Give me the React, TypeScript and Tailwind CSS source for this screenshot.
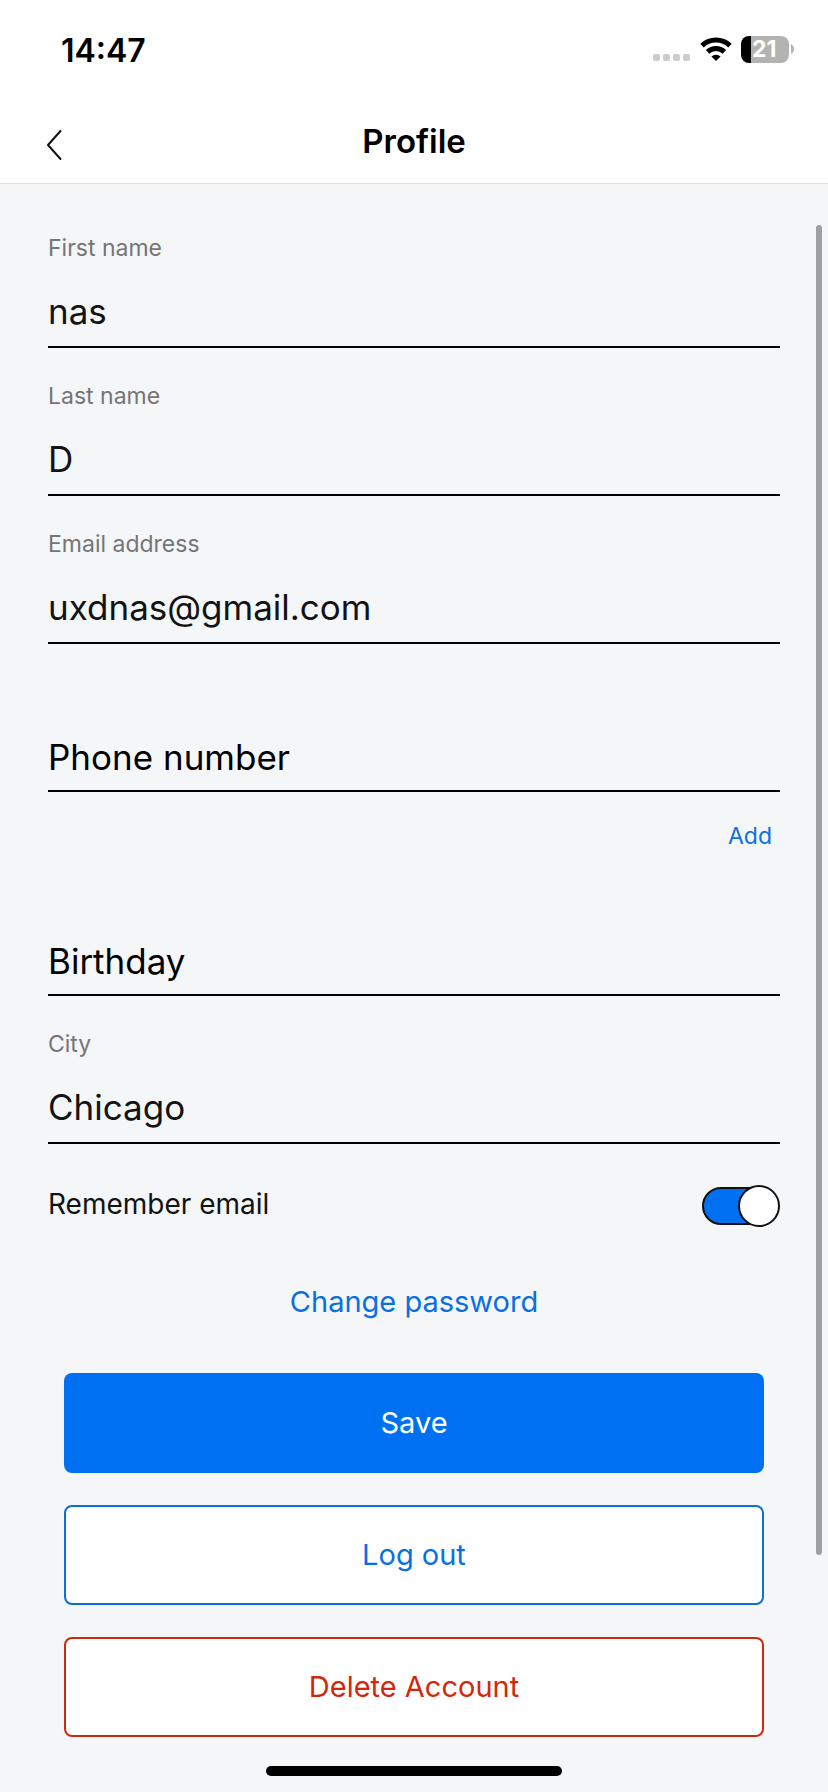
import { useState } from "react";

function StatusBar() {
  return (
    <div className="flex h-[98px] items-center justify-between pr-[34px] pl-[61px]">
      <span className="pt-1 text-[32px] leading-10 font-semibold">14:47</span>
      <div className="flex items-center">
        <svg className="mt-4 h-[7px] w-[37px]" viewBox="0 0 37 7" fill="#cccccc" aria-hidden="true">
          <rect x="0" width="7" height="7" rx="2" />
          <rect x="10" width="7" height="7" rx="2" />
          <rect x="20" width="7" height="7" rx="2" />
          <rect x="30" width="7" height="7" rx="2" />
        </svg>
        <svg className="ml-[10px] h-6 w-8" viewBox="0 0 32 24" fill="none" stroke="#000" strokeWidth="5" aria-hidden="true">
          <path d="M2 8.6a20.5 20.5 0 0 1 28 0" />
          <path d="M7.6 14.8a12.3 12.3 0 0 1 16.8 0" />
          <path d="M16 24l-4.6-4.4a6.6 6.6 0 0 1 9.2 0z" fill="#000" stroke="none" />
        </svg>
        <div className="ml-[9px] flex h-[27px] w-12 items-center overflow-hidden rounded-[8px] bg-[linear-gradient(to_right,#000_21%,#b3b3b3_21%)] pl-[11px]">
          <span className="text-[23px] leading-none font-bold text-white">21</span>
        </div>
        <svg className="ml-[2px] h-[10px] w-[3px]" viewBox="0 0 3 10" fill="#b3b3b3" aria-hidden="true">
          <path d="M0 0c4 2 4 8 0 10z" />
        </svg>
      </div>
    </div>
  );
}

function Field({
  id,
  label,
  type = "text",
  defaultValue = ""
}: {
  id: string;
  label: string;
  type?: string;
  defaultValue?: string;
}) {
  const [value, setValue] = useState(defaultValue);

  // the label rests on the line while the field is empty and floats above once it has a value
  return (
    <div className="relative flex h-[148px] flex-col justify-end border-b-2 border-black">
      <label
        htmlFor={id}
        className={value ? "mb-[82px] text-[23px] leading-8 text-[#757575]" : "text-[35px] leading-[66px] text-black"}
      >
        {label}
      </label>
      <input
        id={id}
        type={type}
        value={value}
        onChange={(event) => setValue(event.target.value)}
        className="absolute inset-x-0 bottom-0 h-[70px] bg-transparent text-[35px] text-[#111314] outline-none"
      />
    </div>
  );
}

export default function App() {
  const [remember, setRemember] = useState(true);

  return (
    <div className="min-h-screen bg-[#f4f6f8] font-['Inter',sans-serif] text-[#111314]">
      <header className="border-b border-[#dfe1e3] bg-white text-black">
        <StatusBar />
        <div className="grid h-[85px] grid-cols-[1fr_auto_1fr] items-center px-[46px]">
          <button type="button" aria-label="Back" className="mt-2 w-4">
            <svg className="h-8 w-4" viewBox="0 0 16 32" fill="none" stroke="#111" strokeWidth="2" strokeLinecap="round" strokeLinejoin="round">
              <path d="M14.5 2L2 16l12.5 14" />
            </svg>
          </button>
          <h1 className="text-[33px] leading-10 font-semibold">Profile</h1>
        </div>
      </header>

      <main className="relative px-12 pt-4 pb-4">
        <form onSubmit={(event) => event.preventDefault()}>
          <Field id="first-name" label="First name" defaultValue="nas" />
          <Field id="last-name" label="Last name" defaultValue="D" />
          <Field id="email" label="Email address" type="email" defaultValue="uxdnas@gmail.com" />
          <Field id="phone" label="Phone number" type="tel" />
          <div className="flex justify-end pt-8 pr-2">
            <button type="button" className="text-[23px] leading-6 text-[#0a6fe0]">
              Add
            </button>
          </div>
          <Field id="birthday" label="Birthday" />
          <Field id="city" label="City" defaultValue="Chicago" />

          <div className="mt-10 flex h-11 items-center justify-between">
            <label htmlFor="remember" className="pb-1 text-[28px] leading-8">
              Remember email
            </label>
            <span className="relative flex h-[42px] w-[78px] items-center">
              <input
                id="remember"
                type="checkbox"
                role="switch"
                checked={remember}
                onChange={(event) => setRemember(event.target.checked)}
                className="peer h-[38px] w-[76px] appearance-none rounded-full border-2 border-[#111] bg-white checked:bg-[#0070f2]"
              />
              <span className="pointer-events-none absolute left-0 h-[42px] w-[42px] rounded-full border-2 border-[#111] bg-white peer-checked:left-9" />
            </span>
          </div>

          <div className="mt-[54px] text-center">
            <a href="#password" className="inline-block text-[29px] leading-10 text-[#0a6fe0]">
              Change password
            </a>
          </div>

          <div className="mt-[51px] flex flex-col gap-8 px-4 text-[29px]">
            <button type="submit" className="h-[100px] rounded-lg bg-[#0070f2] text-white">
              Save
            </button>
            <button type="button" className="h-[100px] rounded-lg border-2 border-[#0a6fd6] bg-white text-[#0a6fe0]">
              Log out
            </button>
            <button type="button" className="h-[100px] rounded-lg border-2 border-[#cc2a0e] bg-white text-[#d3270b]">
              Delete Account
            </button>
          </div>
        </form>

        <div className="mx-auto mt-[29px] h-[10px] w-[296px] rounded-full bg-black" />
        <div className="absolute top-[41px] right-[6px] bottom-[237px] w-[6px] rounded-full bg-[#9fa0a2]" />
      </main>
    </div>
  );
}
